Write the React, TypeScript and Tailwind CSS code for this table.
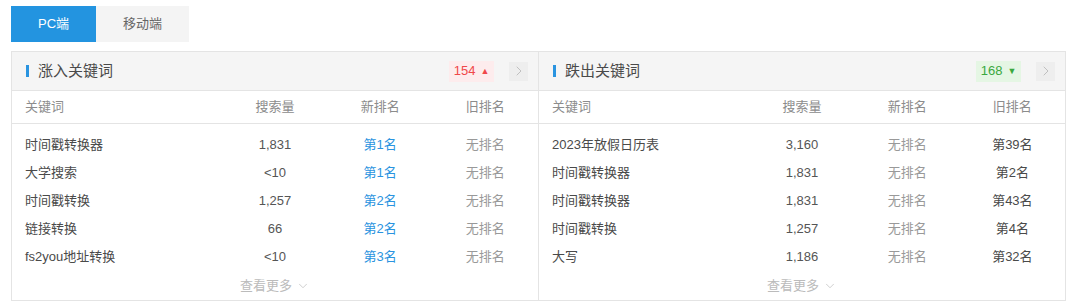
import { ChevronRight, ChevronDown } from "lucide-react";

type Row = { kw: string; vol: string; now: string; old: string };

const inRows: Row[] = [
  { kw: "时间戳转换器", vol: "1,831", now: "第1名", old: "无排名" },
  { kw: "大学搜索", vol: "<10", now: "第1名", old: "无排名" },
  { kw: "时间戳转换", vol: "1,257", now: "第2名", old: "无排名" },
  { kw: "链接转换", vol: "66", now: "第2名", old: "无排名" },
  { kw: "fs2you地址转换", vol: "<10", now: "第3名", old: "无排名" },
];

const outRows: Row[] = [
  { kw: "2023年放假日历表", vol: "3,160", now: "无排名", old: "第39名" },
  { kw: "时间戳转换器", vol: "1,831", now: "无排名", old: "第2名" },
  { kw: "时间戳转换器", vol: "1,831", now: "无排名", old: "第43名" },
  { kw: "时间戳转换", vol: "1,257", now: "无排名", old: "第4名" },
  { kw: "大写", vol: "1,186", now: "无排名", old: "第32名" },
];

function Panel({
  title,
  count,
  up,
  rows,
  last,
}: {
  title: string;
  count: number;
  up: boolean;
  rows: Row[];
  last?: boolean;
}) {
  return (
    <div className={`flex-1 ${last ? "" : "border-r border-[#e4e4e4]"}`}>
      {/* header */}
      <div className="h-[39px] bg-[#f5f5f5] border-b border-[#e4e4e4] flex items-center pl-[14px] pr-[10px]">
        <span className="w-[3px] h-[12px] bg-[#2a94e0] mr-[9px]" />
        <span className="text-[15px] text-[#4a4a4a]">{title}</span>
        <div className="ml-auto flex items-center gap-[15px]">
          <span
            className={`h-[21px] w-[45px] flex items-center justify-center gap-[5px] text-[13px] ${
              up ? "bg-[#fdeced] text-[#f0474a]" : "bg-[#e5f6e4] text-[#3aa83f]"
            }`}
          >
            {count}
            <span className="text-[9px] leading-none">{up ? "▲" : "▼"}</span>
          </span>
          <span className="w-[19px] h-[19px] bg-[#eeeeee] flex items-center justify-center">
            <ChevronRight size={16} strokeWidth={1.2} className="text-[#b4b4b4]" />
          </span>
        </div>
      </div>
      {/* column titles */}
      <div className="grid grid-cols-[40%_20%_20%_20%] h-[33px] items-center border-b border-[#e4e4e4] text-[13px] text-[#8c8c8c]">
        <span className="pl-[13px]">关键词</span>
        <span className="text-center">搜索量</span>
        <span className="text-center">新排名</span>
        <span className="text-center">旧排名</span>
      </div>
      <div className="pt-[7px]">
        {rows.map((r, i) => (
          <div
            key={i}
            className="grid grid-cols-[40%_20%_20%_20%] h-[28px] items-center text-[13px]"
          >
            <span className="pl-[13px] text-[#4a4a4a]">{r.kw}</span>
            <span className="text-center text-[#555]">{r.vol}</span>
            <span className={`text-center ${up ? "text-[#2a94e0]" : "text-[#999]"}`}>{r.now}</span>
            <span className={`text-center ${up ? "text-[#999]" : "text-[#4a4a4a]"}`}>{r.old}</span>
          </div>
        ))}
      </div>
      <div className="h-[29px] flex items-center justify-center gap-[4px] text-[13px] text-[#bbbbbb]">
        查看更多
        <ChevronDown size={14} strokeWidth={1.2} />
      </div>
    </div>
  );
}

export default function App() {
  return (
    <div
      className="w-[1080px] h-[306px] bg-white pt-[6px] pl-[11px]"
      style={{ fontFamily: '"Liberation Sans", "Noto Sans CJK SC", sans-serif' }}
    >
      <div className="flex text-[13px]">
        <button className="w-[85px] h-[36px] bg-[#2394e0] text-white">PC端</button>
        <button className="w-[93px] h-[36px] bg-[#f4f4f4] text-[#666]">移动端</button>
      </div>
      <div className="mt-[9px] w-[1055px] border border-[#e4e4e4] flex">
        <Panel title="涨入关键词" count={154} up rows={inRows} />
        <Panel title="跌出关键词" count={168} up={false} rows={outRows} last />
      </div>
    </div>
  );
}
